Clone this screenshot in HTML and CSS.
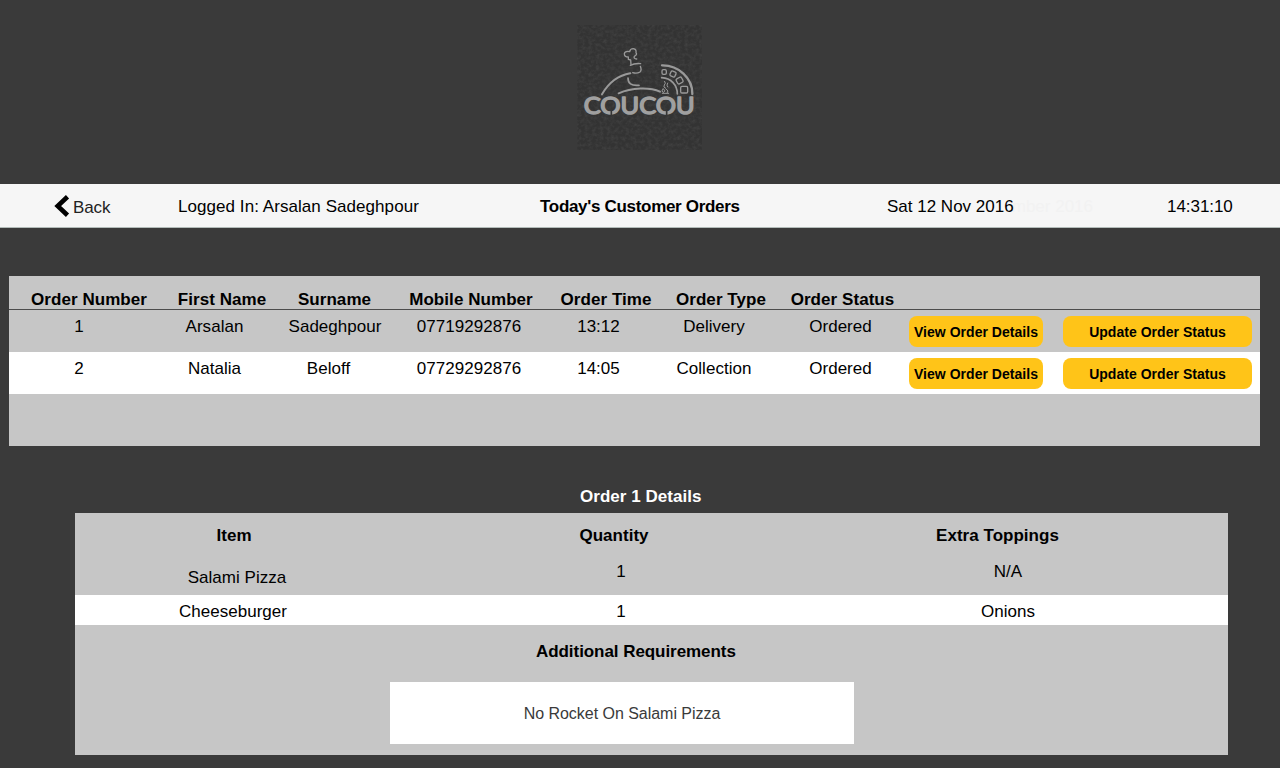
FILE: index.html
```html
<!DOCTYPE html>
<html lang="en">
<head>
<meta charset="utf-8">
<title>Today's Customer Orders</title>
<link rel="stylesheet" href="styles.css">
</head>
<body>
<header class="brand">
  <svg class="logo" viewBox="0 0 420 405" role="img" aria-label="Coucou">
    <defs>
      <filter id="slate" x="0" y="0" width="100%" height="100%">
        <feTurbulence type="fractalNoise" baseFrequency="0.09 0.1" numOctaves="3" seed="8"/>
        <feColorMatrix values="0 0 0 0 1  0 0 0 0 1  0 0 0 0 1  0.5 0 0 0 -0.18"/>
      </filter>
    </defs>
    <rect x="22" y="15" width="374" height="375" fill="#333"/>
    <rect x="22" y="15" width="374" height="375" filter="url(#slate)" opacity=".25"/>
    <g class="ink">
      <path d="M96 223C115 190 145 166 181 160" stroke-width="6"/>
      <path d="M146 220C185 202 240 201 270 215" stroke-width="6"/>
      <path d="M183 133L182 120L175 118L175 111Q163 111 163 101Q165 92 179 95Q180 86 190 86Q200 88 198 98Q203 104 193 109Q190 116 200 117" stroke-width="4"/>
      <path d="M181 136Q195 129 212 131M211 139Q216 151 210 156Q200 162 188 158" stroke-width="4"/>
      <path d="M174 174C174 190 183 198 207 196" stroke-width="5"/>
      <path d="M276 136C325 135 368 174 367 222" stroke-width="7"/>
      <path d="M275 173C303 174 322 195 322 222" stroke-width="5"/>
      <g stroke-width="4">
        <rect x="276" y="149" width="13" height="14" rx="4"/>
        <rect x="301" y="154" width="16" height="16" rx="4" transform="rotate(24 309 162)"/>
        <rect x="320" y="173" width="18" height="17" rx="4" transform="rotate(-28 329 182)"/>
        <rect x="332" y="199" width="21" height="20" rx="4"/>
      </g>
      <path d="M284 184Q289 190 283 195Q278 202 287 205M293 189Q288 196 293 201M279 206Q272 214 280 218Q289 213 281 207M288 207Q298 213 291 219M277 220H296" stroke-width="3"/>
    </g>
    <text class="wordmark" x="41" y="282" textLength="333" lengthAdjust="spacingAndGlyphs">COUCOU</text>
    <path class="notch" d="M124 268V290M290 268V290"/>
  </svg>
</header>

<nav class="bar">
  <a class="back"><svg class="chevron" viewBox="0 0 15 22"><path d="M13 1.8L3.2 11L13 20.2"/></svg><span>Back</span></a>
  <span class="user">Logged In: Arsalan Sadeghpour</span>
  <h1 class="heading">Today's Customer Orders</h1>
  <span class="date"><span class="ghost">mber 2016</span><span class="today">Sat 12 Nov 2016</span></span>
  <span class="clock">14:31:10</span>
</nav>

<section class="orders">
  <div class="orders-head">
    <span>Order Number</span><span>First Name</span><span>Surname</span><span>Mobile Number</span><span>Order Time</span><span>Order Type</span><span>Order Status</span>
  </div>
  <div class="order">
    <span>1</span><span>Arsalan</span><span>Sadeghpour</span><span>07719292876</span><span>13:12</span><span>Delivery</span><span>Ordered</span>
    <button class="btn">View Order Details</button><button class="btn update">Update Order Status</button>
  </div>
  <div class="order alt">
    <span>2</span><span>Natalia</span><span class="short">Beloff</span><span>07729292876</span><span>14:05</span><span>Collection</span><span>Ordered</span>
    <button class="btn">View Order Details</button><button class="btn update">Update Order Status</button>
  </div>
</section>

<h2 class="details-title">Order 1 Details</h2>
<section class="details">
  <div class="details-head"><span>Item</span><span>Quantity</span><span>Extra Toppings</span></div>
  <div class="item first"><span class="name">Salami Pizza</span><span>1</span><span>N/A</span></div>
  <div class="item alt"><span class="name">Cheeseburger</span><span>1</span><span>Onions</span></div>
  <h3 class="extra-title">Additional Requirements</h3>
  <div class="note">No Rocket On Salami Pizza</div>
</section>
</body>
</html>
```

FILE: styles.css
```css
* { box-sizing: border-box; }
body {
  margin: 0;
  height: 768px;
  overflow: hidden;
  background: #3a3a3a;
  color: #000;
  font: 17px/20px "Liberation Sans", Arial, sans-serif;
  letter-spacing: .03px;
  white-space: nowrap;
}
h1, h2, h3 { margin: 0; font-size: 17px; line-height: 20px; }

.brand { height: 184px; padding: 20px 0 0 570px; }
.logo { display: block; width: 140px; height: 135px; }
.ink { fill: none; stroke: #999; stroke-linecap: round; stroke-linejoin: round; }
.wordmark {
  font: 71px Lato, sans-serif;
  fill: #a0a0a0;
  stroke: #a0a0a0;
  stroke-width: 4.5;
  stroke-linejoin: round;
  letter-spacing: 0;
}
.notch { stroke: #363636; stroke-width: 5; }

.bar {
  display: grid;
  grid-template-columns: 124px 362px 347px 280px 1fr;
  align-items: center;
  height: 44px;
  padding: 0 0 0 54px;
  background: #f6f6f6;
  border-bottom: 1px solid #b3bcb9;
}
.back { display: flex; align-items: center; gap: 3px; padding-top: 4px; color: #222; letter-spacing: -.1px; }
.chevron { width: 16px; height: 22px; margin-top: -4px; fill: none; stroke: #000; stroke-width: 4.6; }
.user, .date, .clock, .heading { padding-top: 3px; }
.user { letter-spacing: .06px; }
.clock { letter-spacing: -.05px; }
.heading { letter-spacing: -.31px; }
.date { position: relative; letter-spacing: 0; }
.today { position: relative; }
.ghost { position: absolute; right: 74px; color: #f2f2f2; }

.orders { width: 1251px; height: 170px; margin: 48px 0 0 9px; background: #c6c6c6; }
.orders-head {
  display: grid;
  grid-template-columns: 160px 106px 119px 154px 116px 114px 129px;
  height: 34px;
  padding-top: 14px;
  border-bottom: 1px solid #4c4c4c;
  font-weight: bold;
  letter-spacing: .06px;
  text-align: center;
}
.order {
  display: grid;
  grid-template-columns: 140px 131px 110px 158px 101px 130px 123px 148px 202px;
  height: 42px;
  padding-top: 6px;
  text-align: center;
}
.order > span { padding-top: 1px; }
.order > .short { padding-right: 13px; }
.alt { background: #fff; }
.btn {
  justify-self: start;
  width: 134px;
  height: 31px;
  margin-left: 7px;
  padding: 1px 0 0;
  border: 0;
  border-radius: 8px;
  background: #ffc418;
  color: #000;
  font: bold 14px/30px "Liberation Sans", Arial, sans-serif;
  letter-spacing: .03px;
}
.btn.update { width: 189px; margin-left: 13px; }

.details-title { margin-top: 41px; padding-left: 580px; color: #fff; }
.details { width: 1153px; height: 242px; margin: 6px 0 0 75px; background: #c6c6c6; }
.details-head, .item { display: grid; text-align: center; }
.details-head { grid-template-columns: 318px 442px 325px; height: 48px; padding-top: 13px; font-weight: bold; }
.item { grid-template-columns: 316px 460px 314px; height: 30px; padding-top: 7px; }
.item.first { height: 34px; padding-top: 1px; }
.item.first .name { padding: 6px 0 0 8px; }
.extra-title { padding: 17px 0 0 461px; letter-spacing: -.06px; }
.note {
  width: 464px;
  height: 62px;
  margin: 20px 0 0 315px;
  padding-top: 1px;
  background: #fff;
  color: #3a3a3a;
  font-size: 16px;
  line-height: 62px;
  letter-spacing: -.03px;
  text-align: center;
}
```
